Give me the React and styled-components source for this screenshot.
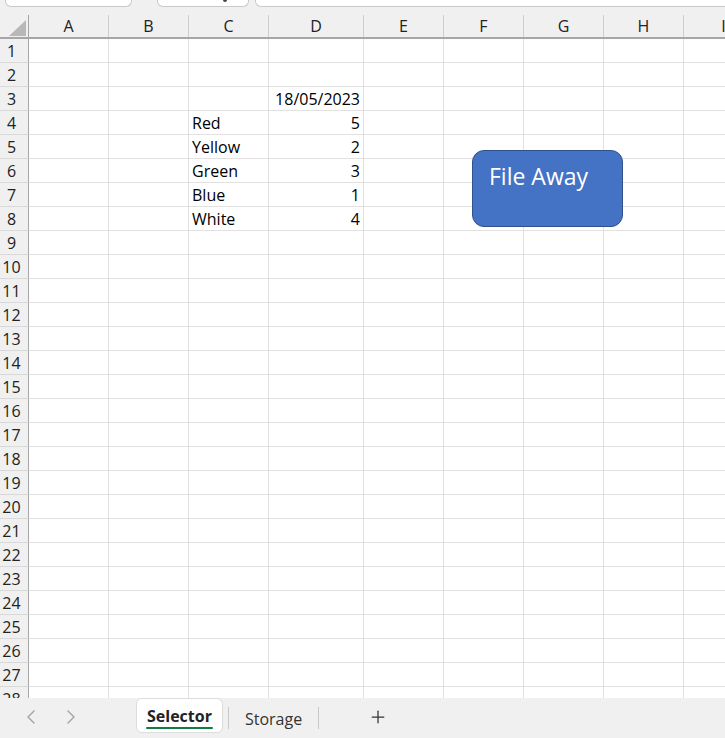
import React from 'react';
import styled, { createGlobalStyle } from 'styled-components';
import { ChevronLeft, ChevronRight, Plus } from 'lucide-react';

const GlobalStyle = createGlobalStyle`
  html, body {
    margin: 0;
    padding: 0;
    background: #f0f0f0;
  }
  body {
    font-family: "Open Sans", "Noto Sans", sans-serif;
    color: #000;
  }
`

const COLS = [
  { l: 'A', w: 80 },
  { l: 'B', w: 80 },
  { l: 'C', w: 80 },
  { l: 'D', w: 95 },
  { l: 'E', w: 80 },
  { l: 'F', w: 80 },
  { l: 'G', w: 80 },
  { l: 'H', w: 80 },
  { l: 'I', w: 80 },
];

// values by row number -> column letter
const DATA = {
  3: { D: '18/05/2023' },
  4: { C: 'Red', D: '5' },
  5: { C: 'Yellow', D: '2' },
  6: { C: 'Green', D: '3' },
  7: { C: 'Blue', D: '1' },
  8: { C: 'White', D: '4' },
};

const ROWS = Array.from({ length: 28 }, (_, i) => i + 1);

const Page = styled.div`
  width: 725px;
  height: 738px;
  display: flex;
  flex-direction: column;
  overflow: hidden;
  background: #f0f0f0;
`

const TopStrip = styled.div`
  height: 15px;
  flex-shrink: 0;
  display: flex;
  align-items: flex-start;
  overflow: hidden;
`

const FieldBox = styled.div`
  box-sizing: border-box;
  height: 7px;
  margin-left: ${p => p.$left}px;
  width: ${p => p.$w}px;
  flex-shrink: 0;
  background: #fff;
  border: 1px solid #c9c9c9;
  border-top: none;
  border-radius: 0 0 6px 6px;
  display: flex;
  justify-content: flex-end;
  align-items: flex-start;
`

const Caret = styled.div`
  width: 4px;
  height: 2px;
  margin-right: 21px;
  background: #444;
  border-radius: 0 0 2px 2px;
`

const Sheet = styled.div`
  flex: 1;
  position: relative;
  overflow: hidden;
  background: #fff;
`

const HeadRow = styled.div`
  display: flex;
  height: 24px;
  box-sizing: border-box;
  background: #f0f0f0;
  border-bottom: 2px solid #a6a6a6;
`

const Corner = styled.div`
  width: 29px;
  flex-shrink: 0;
  box-sizing: border-box;
  border-right: 1px solid #a6a6a6;
  display: flex;
  align-items: flex-end;
  padding: 0 0 1px 9px;
`

const ColHead = styled.div`
  width: ${p => p.$w}px;
  flex-shrink: 0;
  box-sizing: border-box;
  border-right: 1px solid #cdcdcd;
  text-align: center;
  font-size: 16px;
  line-height: 23px;
  color: #222;
`

const Line = styled.div`
  display: flex;
  height: 24px;
`

const RowHead = styled.div`
  width: 29px;
  flex-shrink: 0;
  box-sizing: border-box;
  background: #f0f0f0;
  border-right: 1px solid #a6a6a6;
  border-bottom: 1px solid #d9d9d9;
  padding: 1px 5px 0 0;
  text-align: center;
  font-size: 16px;
  line-height: 23px;
  color: #222;
`

const Cell = styled.div`
  width: ${p => p.$w}px;
  flex-shrink: 0;
  box-sizing: border-box;
  border-right: 1px solid #e1e1e1;
  border-bottom: 1px solid #e1e1e1;
  padding: 1px 3px 0 3px;
  text-align: ${p => (p.$num ? 'right' : 'left')};
  font-size: 16px;
  line-height: 23px;
  white-space: nowrap;
  overflow: hidden;
`

const Shape = styled.div`
  position: absolute;
  left: 472px;
  top: 135px;
  width: 151px;
  height: 77px;
  box-sizing: border-box;
  background: #4472c4;
  border: 1.5px solid #2f528f;
  border-radius: 12px;
  color: #fff;
  font-size: 23px;
  padding: 10px 16px;
  line-height: 31px;
`

const TabBar = styled.div`
  height: 40px;
  flex-shrink: 0;
  display: flex;
  align-items: flex-start;
  background: #f0f0f0;
`

const Nav = styled.div`
  display: flex;
  align-items: center;
  gap: 16px;
  height: 38px;
  padding-left: 19px;
  width: 136px;
  box-sizing: border-box;
  color: #a3a3a3;
`

const Tab = styled.div`
  box-sizing: border-box;
  height: ${p => (p.$active ? 35 : 38)}px;
  padding: ${p => (p.$active ? '0 10px' : '3px 16px 0')};
  display: flex;
  align-items: center;
  font-size: 16px;
  font-weight: ${p => (p.$active ? 700 : 400)};
  color: ${p => (p.$active ? '#222' : '#333')};
  background: ${p => (p.$active ? '#fff' : 'transparent')};
  border: ${p => (p.$active ? '1px solid #dcdcdc' : 'none')};
  border-radius: 6px;
  position: relative;
`

const Underline = styled.div`
  position: absolute;
  left: 9px;
  right: 9px;
  bottom: 3px;
  height: 2px;
  border-radius: 1px;
  background: #107c41;
`

const Divider = styled.div`
  width: 1px;
  height: 22px;
  margin: 9px 0 0 ${p => p.$gap}px;
  background: #c8c8c8;
`

const AddButton = styled.div`
  display: flex;
  align-items: center;
  justify-content: center;
  width: 40px;
  height: 38px;
  margin-left: 39px;
  color: #333;
`

export default function App() {
  return (
    <Page>
      <GlobalStyle />
      <TopStrip>
        <FieldBox $left={5} $w={127} />
        <FieldBox $left={25} $w={92}>
          <Caret />
        </FieldBox>
        <FieldBox $left={6} $w={480} />
      </TopStrip>
      <Sheet>
        <HeadRow>
          <Corner>
            <svg width="17" height="16" viewBox="0 0 17 16">
              <polygon points="0,16 17,0 17,16" fill="#b8b8b8" />
            </svg>
          </Corner>
          {COLS.map(c => (
            <ColHead key={c.l} $w={c.w}>{c.l}</ColHead>
          ))}
        </HeadRow>
        {ROWS.map(r => (
          <Line key={r}>
            <RowHead>{r}</RowHead>
            {COLS.map(c => {
              const v = DATA[r] && DATA[r][c.l];
              return (
                <Cell key={c.l} $w={c.w} $num={v && /^[\d/]+$/.test(v)}>
                  {v}
                </Cell>
              );
            })}
          </Line>
        ))}
        <Shape>File Away</Shape>
      </Sheet>
      <TabBar>
        <Nav>
          <ChevronLeft size={24} strokeWidth={1.4} />
          <ChevronRight size={24} strokeWidth={1.4} />
        </Nav>
        <Tab $active>
          Selector
          <Underline />
        </Tab>
        <Divider $gap={5} />
        <Tab>Storage</Tab>
        <Divider $gap={0} />
        <AddButton>
          <Plus size={20} strokeWidth={1.5} />
        </AddButton>
      </TabBar>
    </Page>
  );
}
